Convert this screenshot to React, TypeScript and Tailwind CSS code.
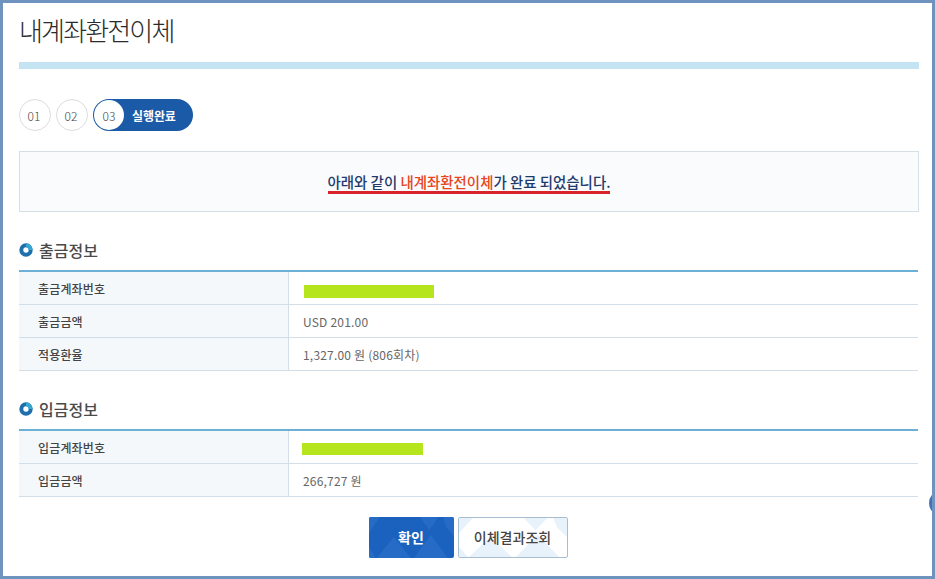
const KR = "font-['Noto_Sans_CJK_KR','Noto_Sans',sans-serif]";

function Diamonds({ color }: { color: string }) {
  return (
    <svg className="absolute inset-0 h-full w-full" viewBox="0 0 110 41" preserveAspectRatio="none">
      <path d="M0 0h14L0 16zM10 41L32 20 54 41zM66 0h24L78 13zM58 41L80 18 102 41zM96 0h14v20L100 10zM0 30l9 11H0z" fill={color} />
    </svg>
  );
}

function BulletIcon() {
  return (
    <svg width="14" height="14" viewBox="0 0 14 14" className="shrink-0">
      <circle cx="7" cy="7" r="4.7" fill="none" stroke="#1f6fae" strokeWidth="4" />
      <path d="M7 2.3a4.7 4.7 0 0 1 4.7 4.7" fill="none" stroke="#35a7d0" strokeWidth="4" />
    </svg>
  );
}

function Row({ label, children }: { label: string; children: React.ReactNode }) {
  return (
    <div className="flex h-[33px] border-b border-[#d3dfe8]">
      <div className="flex w-[270px] items-center border-r border-[#d3dfe8] bg-[#f5f8fb] pl-[19px] pt-[2px] text-[12px] font-medium tracking-[0.15px] text-[#444]">
        {label}
      </div>
      <div className="flex flex-1 items-center pl-[14px] pt-[2px] text-[12px] tracking-[0.2px] text-[#666]">{children}</div>
    </div>
  );
}

function Masked({ w, h, ml, mt }: { w: number; h: number; ml: number; mt: number }) {
  return <div className="bg-[#b5e61d]" style={{ width: w, height: h, marginLeft: ml, marginTop: mt }} />;
}

function Section({ title, children }: { title: string; children: React.ReactNode }) {
  return (
    <section className="mr-[1px]">
      <div className="flex h-[38px] items-center gap-[6px] pb-[3px]">
        <BulletIcon />
        <h3 className="text-[16px] font-medium text-[#4a4a4a]">{title}</h3>
      </div>
      <div className="border-t-2 border-[#6cb0d6]">{children}</div>
    </section>
  );
}

export default function App() {
  return (
    <div className={`relative h-[579px] w-[935px] overflow-hidden border-[3px] border-[#6f93bf] bg-white ${KR}`}>
      <div className="absolute right-[-23px] top-[487px] h-[26px] w-[26px] rounded-full bg-[#4472b8]" />
      <div className="pl-[16px] pr-[13px]">
        <h1 className="flex h-[59px] items-center pb-[6px] text-[26px] font-light tracking-[-1.85px] text-[#2b2b2b]">내계좌환전이체</h1>
        <div className="h-[7px] bg-[#c5e4f3]" />

        <div className="mt-[30px] flex items-center gap-[5px]">
          <span className="flex h-[32px] w-[32px] items-center justify-center rounded-full border border-[#ddd] pr-[2px] pt-px text-[12px] font-light text-[#444]">01</span>
          <span className="flex h-[32px] w-[32px] items-center justify-center rounded-full border border-[#ddd] pr-[2px] pt-px text-[12px] font-light text-[#444]">02</span>
          <span className="flex h-[32px] w-[100px] items-center rounded-full bg-[#1b5aa6] p-px">
            <span className="flex h-[30px] w-[30px] items-center justify-center rounded-full bg-white pt-px text-[12px] font-light text-[#444]">03</span>
            <span className="ml-[8px] pt-px text-[12px] font-bold tracking-[-0.1px] text-white">실행완료</span>
          </span>
        </div>

        <div className="mt-[20px] flex h-[61px] items-center justify-center border border-[#d5dfe6] bg-[#f9fbfd] pt-[3px]">
          <p className="border-b-[3px] border-[#d8232a] text-[14.45px] font-medium leading-[18px] text-[#1f3a6b]">
            아래와 같이 <span className="text-[#e8451e]">내계좌환전이체</span>가 완료 되었습니다.
          </p>
        </div>

        <div className="mt-[20px]">
          <Section title="출금정보">
            <Row label="출금계좌번호">
              <Masked w={130} h={13} ml={1} mt={4} />
            </Row>
            <Row label="출금금액">USD 201.00</Row>
            <Row label="적용환율">1,327.00 원 (806회차)</Row>
          </Section>
        </div>

        <div className="mt-[20px]">
          <Section title="입금정보">
            <Row label="입금계좌번호">
              <Masked w={121} h={12} ml={-1} mt={2} />
            </Row>
            <Row label="입금금액">266,727 원</Row>
          </Section>
        </div>

        <div className="mt-[20px] flex justify-center gap-[4px] pr-[2px]">
          <button className="relative h-[41px] w-[85px] overflow-hidden rounded-[2px] bg-[#1b62bf] text-[14px] font-bold text-white">
            <Diamonds color="#266cc6" />
            <span className="relative">확인</span>
          </button>
          <button className="relative h-[41px] w-[110px] overflow-hidden rounded-[2px] border border-[#a9bdd2] bg-white text-[14px] font-medium text-[#444]">
            <Diamonds color="#e8f2fb" />
            <span className="relative">이체결과조회</span>
          </button>
        </div>
      </div>
    </div>
  );
}
